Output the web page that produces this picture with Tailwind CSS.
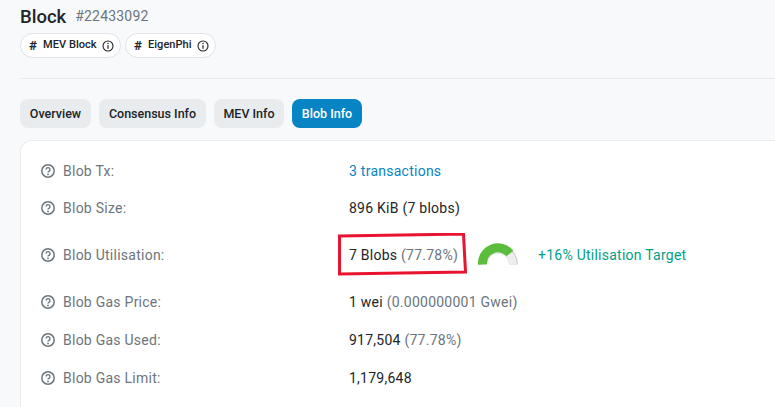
<!DOCTYPE html>
<html>
<head>
<meta charset="utf-8">
<script src="https://cdn.jsdelivr.net/npm/@tailwindcss/browser@4"></script>
</head>
<body class="m-0 h-[407px] w-[775px] overflow-hidden bg-[#f8f9fb] font-['Roboto',sans-serif] text-[#212529]">
<svg width="0" height="0" class="absolute">
  <defs>
    <symbol id="q" viewBox="0 0 14 14"><circle cx="7" cy="7" r="6.2" fill="none" stroke="currentColor" stroke-width="1.5"/><path d="M5.1 5.6a1.95 1.95 0 1 1 2.9 1.7c-.6.35-1 .7-1 1.3" fill="none" stroke="currentColor" stroke-width="1.4"/><circle cx="7" cy="10.4" r=".9" fill="currentColor"/></symbol>
    <symbol id="i" viewBox="0 0 12 12"><circle cx="6" cy="6" r="5" fill="none" stroke="currentColor" stroke-width="1.1"/><rect x="5.4" y="5.2" width="1.2" height="3.6" fill="currentColor"/><circle cx="6" cy="3.6" r=".75" fill="currentColor"/></symbol>
  </defs>
</svg>
<div class="h-[407px] overflow-hidden pl-5">
  <div class="flex h-[33px] items-center gap-[9px]">
    <span class="text-[18.5px] font-medium leading-[34px]">Block</span>
    <span class="text-[14px] tracking-[0.2px] text-[#6c757d]">#22433092</span>
  </div>
  <div class="flex gap-[4px]">
    <span class="flex h-[25px] w-[101px] items-center gap-[5px] rounded-full border border-[#dee2e6] bg-white pl-[8px] text-[11.1px] font-medium"><b class="w-[9px] text-[13.5px] font-bold leading-none">#</b>MEV Block<svg class="size-[12px]"><use href="#i"/></svg></span>
    <span class="flex h-[25px] w-[91px] items-center gap-[5px] rounded-full border border-[#dee2e6] bg-white pl-[8px] text-[11.1px] font-medium"><b class="w-[9px] text-[13.5px] font-bold leading-none">#</b>EigenPhi<svg class="size-[12px]"><use href="#i"/></svg></span>
  </div>
  <div class="mt-[20px] h-px bg-[#e9ecef]"></div>
  <div class="mt-[20px] flex gap-2 text-[12.5px] font-medium leading-[29px]">
    <span class="h-[29px] w-[71px] rounded-lg bg-[#e9ecef] text-center">Overview</span>
    <span class="h-[29px] w-[107px] rounded-lg bg-[#e9ecef] text-center">Consensus Info</span>
    <span class="h-[29px] w-[70px] rounded-lg bg-[#e9ecef] text-center">MEV Info</span>
    <span class="h-[29px] w-[70px] rounded-lg bg-[#0784c3] text-center text-white">Blob Info</span>
  </div>
  <div class="relative mt-[12px] h-[267px] rounded-tl-xl border-l border-t border-[#e9ecef] bg-white pl-5 text-[14px] tracking-[0.25px]">
    <div class="flex h-[20px] items-center mt-[20px]"><svg class="size-[14px] text-[#6c757d]"><use href="#q"/></svg><span class="ml-2 w-[286px] text-[#6c757d]">Blob Tx:</span><span class="text-[#0784c3]">3 transactions</span></div>
    <div class="flex h-[20px] items-center mt-[17px]"><svg class="size-[14px] text-[#6c757d]"><use href="#q"/></svg><span class="ml-2 w-[286px] text-[#6c757d]">Blob Size:</span><span>896 KiB (7 blobs)</span></div>
    <div class="flex h-[20px] items-center mt-[27px]"><svg class="size-[14px] text-[#6c757d]"><use href="#q"/></svg><span class="ml-2 w-[286px] text-[#6c757d]">Blob Utilisation:</span><span class="w-[129px]">7 Blobs <span class="text-[#6c757d]">(77.78%)</span></span>
      <svg class="h-[24px] w-[42px]" viewBox="0 0 42 24"><path d="M4.5 21.5A15.5 15.5 0 0 1 35.5 21.5" fill="none" stroke="#cfcfcf" stroke-width="9"/><path d="M5 21.5A15 15 0 0 1 35 21.5" fill="none" stroke="#eeeeee" stroke-width="7.6"/><path d="M4.5 21.5A15.5 15.5 0 0 1 31.9 10.5" fill="none" stroke="#5bbd3c" stroke-width="9"/></svg>
      <span class="ml-[18px] text-[#00a186]">+16% Utilisation Target</span></div>
    <div class="flex h-[20px] items-center mt-[27px]"><svg class="size-[14px] text-[#6c757d]"><use href="#q"/></svg><span class="ml-2 w-[286px] text-[#6c757d]">Blob Gas Price:</span><span>1 wei <span class="text-[#6c757d]">(0.000000001 Gwei)</span></span></div>
    <div class="flex h-[20px] items-center mt-[18px]"><svg class="size-[14px] text-[#6c757d]"><use href="#q"/></svg><span class="ml-2 w-[286px] text-[#6c757d]">Blob Gas Used:</span><span>917,504 <span class="text-[#6c757d]">(77.78%)</span></span></div>
    <div class="flex h-[20px] items-center mt-[18px]"><svg class="size-[14px] text-[#6c757d]"><use href="#q"/></svg><span class="ml-2 w-[286px] text-[#6c757d]">Blob Gas Limit:</span><span>1,179,648</span></div>
    <svg class="absolute left-[317px] top-[92px]" width="130" height="44" viewBox="0 0 130 44"><path d="M1.5 3L125.5 1L127.5 39L1.5 41Z" fill="none" stroke="#e8132f" stroke-width="3"/></svg>
  </div>
</div>
</body>
</html>
